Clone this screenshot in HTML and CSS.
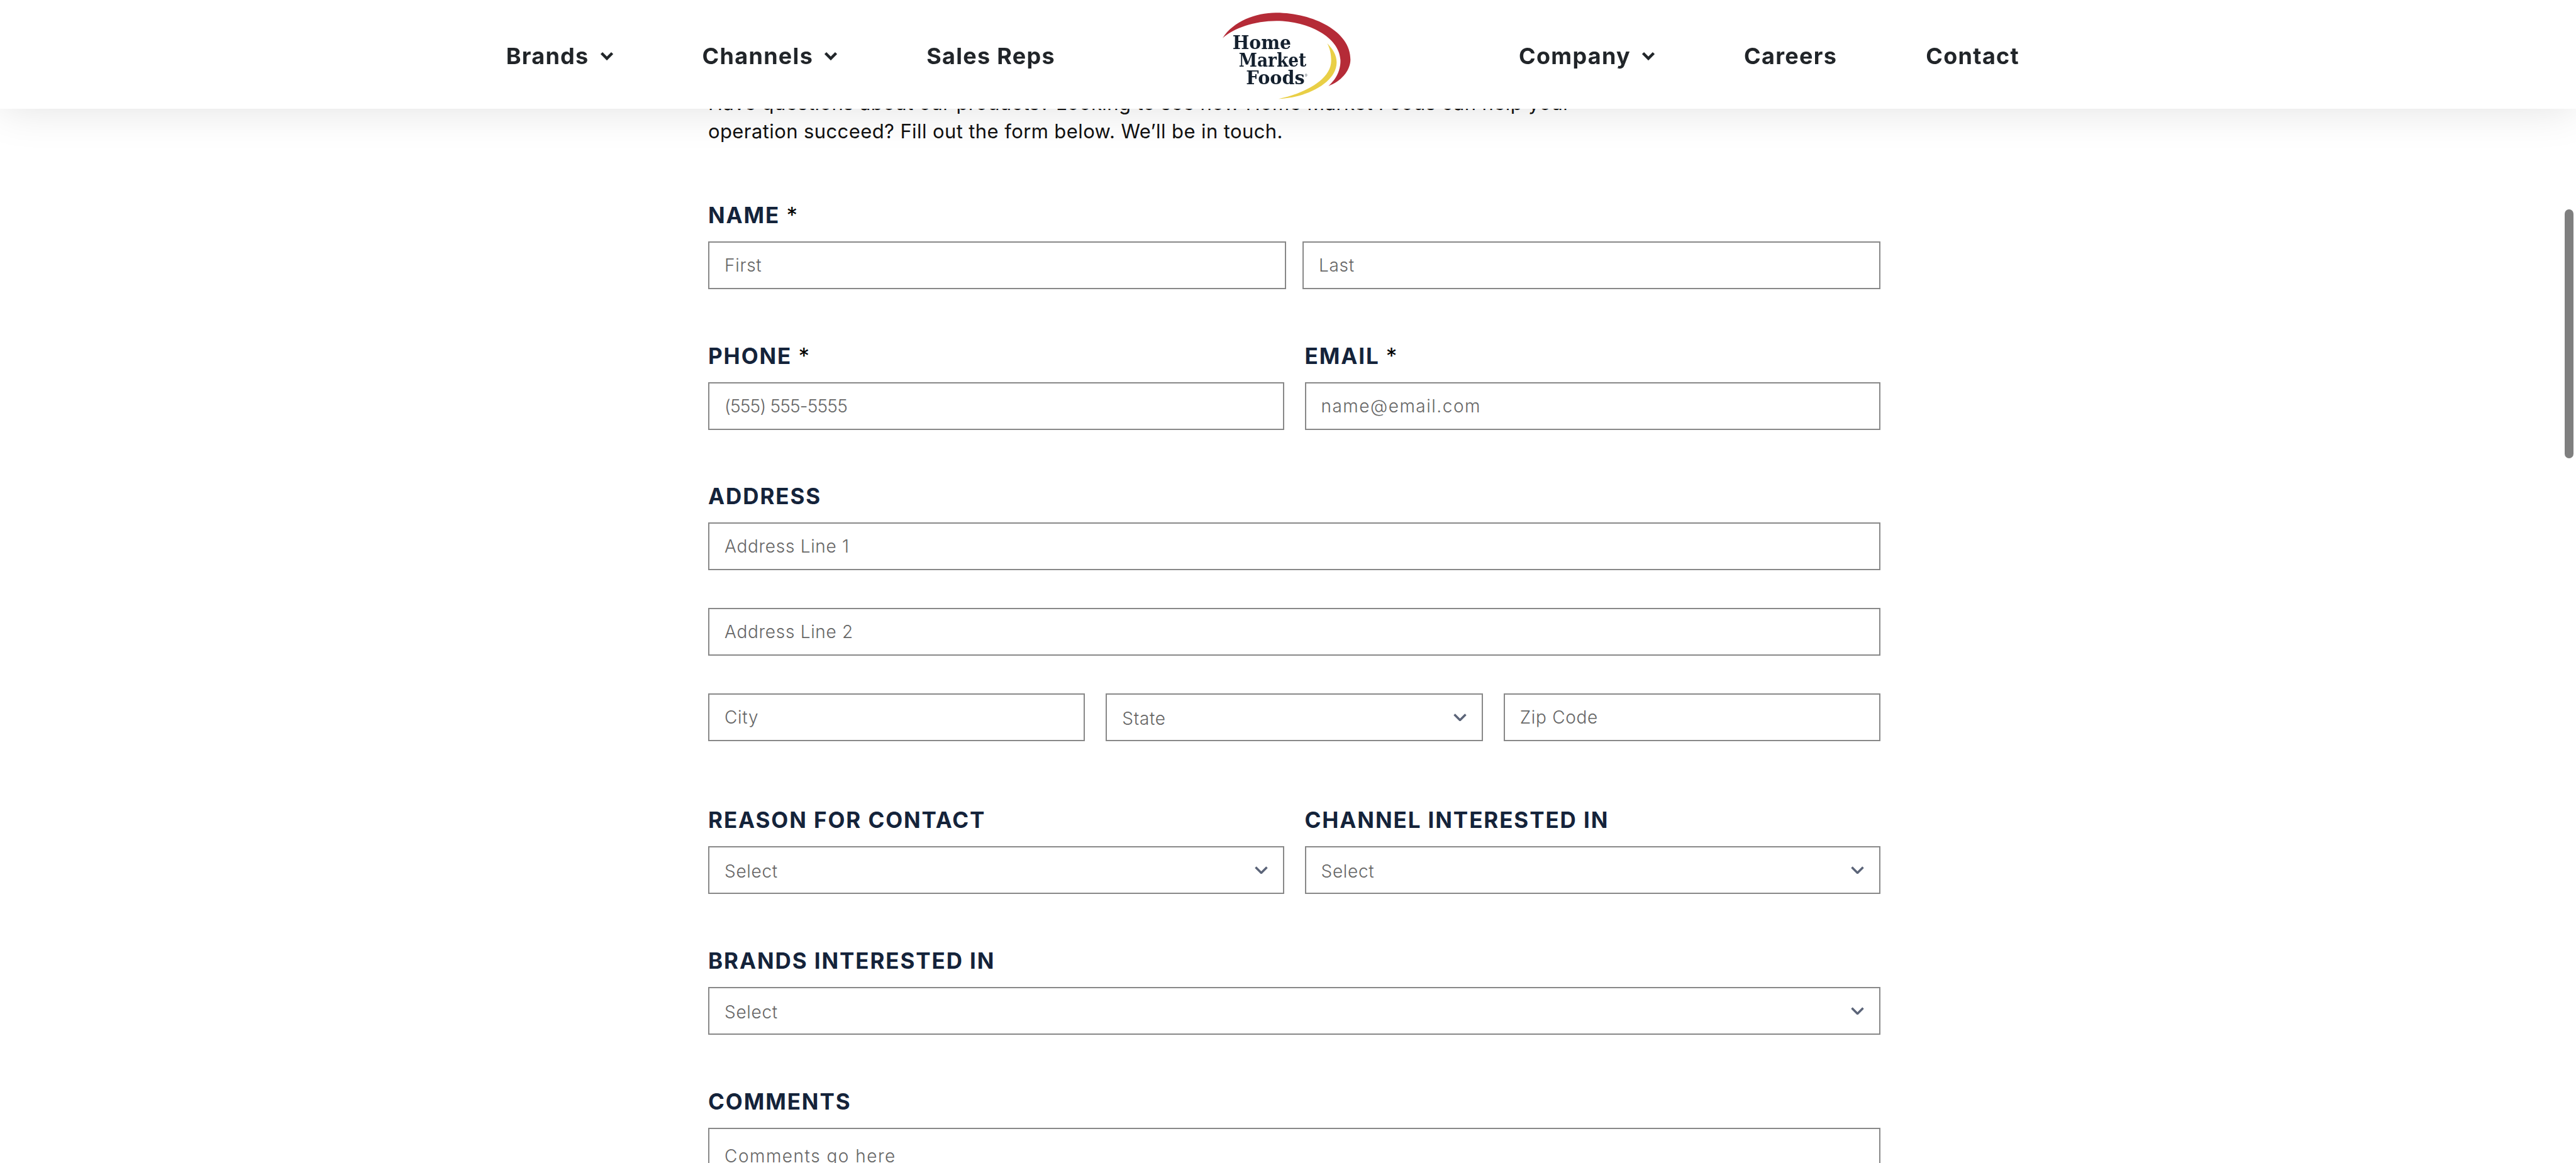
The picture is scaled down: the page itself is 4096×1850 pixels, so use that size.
FILE: index.html
```html
<!DOCTYPE html>
<html lang="en">
<head>
    <meta charset="UTF-8">
    <meta name="viewport" content="width=device-width, initial-scale=1.0">
    <title>Contact - Home Market Foods</title>
    <link rel="stylesheet" href="styles.css">
</head>
<body>
    <header class="site-header">
        <nav class="nav nav-left">
            <a class="nav-link" href="#">Brands
                <svg class="nav-chevron" viewBox="0 0 22 14"><path d="M2.500 2.500 11 11l8.500-8.500"/></svg>
            </a>
            <a class="nav-link" href="#">Channels
                <svg class="nav-chevron" viewBox="0 0 22 14"><path d="M2.500 2.500 11 11l8.500-8.500"/></svg>
            </a>
            <a class="nav-link" href="#">Sales Reps</a>
        </nav>
        <a class="logo" href="#">
            <svg viewBox="0 0 1200 519" width="400" height="173">
                <path class="logo-red" d="M288 182C340 100 450 60 545 61C720 62 900 150 898 285C897 340 850 390 793 410C840 370 852 320 850 285C845 180 700 100 545 100C440 100 340 135 288 182Z"/>
                <path class="logo-yellow" d="M787 207C815 235 833 265 832 300C830 390 700 465 555 472C680 445 805 380 806 290C806 260 800 230 787 207Z"/>
                <text class="logo-text" x="335" y="235" textLength="280" lengthAdjust="spacingAndGlyphs">Home</text>
                <text class="logo-text" x="365" y="319" textLength="323" lengthAdjust="spacingAndGlyphs">Market</text>
                <text class="logo-text" x="400" y="403" textLength="280" lengthAdjust="spacingAndGlyphs">Foods</text>
                <text class="logo-mark" x="680" y="366">®</text>
            </svg>
        </a>
        <nav class="nav nav-right">
            <a class="nav-link" href="#">Company
                <svg class="nav-chevron" viewBox="0 0 22 14"><path d="M2.500 2.500 11 11l8.500-8.500"/></svg>
            </a>
            <a class="nav-link" href="#">Careers</a>
            <a class="nav-link" href="#">Contact</a>
        </nav>
    </header>

    <main class="content">
        <p class="intro">Have questions about our products? Looking to see how Home Market Foods can help your<br>operation succeed? Fill out the form below. We’ll be in touch.</p>

        <form class="contact-form">
            <div class="field">
                <label class="field-label">NAME <span class="req">*</span></label>
                <div class="row row-tight">
                    <input class="control" type="text" placeholder="First">
                    <input class="control" type="text" placeholder="Last">
                </div>
            </div>

            <div class="row">
                <div class="field">
                    <label class="field-label">PHONE <span class="req">*</span></label>
                    <input class="control control-phone" type="text" placeholder="(555) 555-5555">
                </div>
                <div class="field">
                    <label class="field-label">EMAIL <span class="req">*</span></label>
                    <input class="control control-wide" type="text" placeholder="name@email.com">
                </div>
            </div>

            <div class="field field-address">
                <label class="field-label">ADDRESS</label>
                <input class="control stacked" type="text" placeholder="Address Line 1">
                <input class="control stacked" type="text" placeholder="Address Line 2">
                <div class="row">
                    <input class="control" type="text" placeholder="City">
                    <select class="control control-select"><option>State</option></select>
                    <input class="control" type="text" placeholder="Zip Code">
                </div>
            </div>

            <div class="row">
                <div class="field">
                    <label class="field-label">REASON FOR CONTACT</label>
                    <select class="control control-select"><option>Select</option></select>
                </div>
                <div class="field">
                    <label class="field-label">CHANNEL INTERESTED IN</label>
                    <select class="control control-select"><option>Select</option></select>
                </div>
            </div>

            <div class="field">
                <label class="field-label">BRANDS INTERESTED IN</label>
                <select class="control control-select"><option>Select</option></select>
            </div>

            <div class="field">
                <label class="field-label">COMMENTS</label>
                <textarea class="control control-area control-wide" placeholder="Comments go here"></textarea>
            </div>
        </form>
    </main>

    <div class="scroll-thumb"></div>
</body>
</html>
```

FILE: styles.css
```css
html, body {
    height: 100%;
    margin: 0;
    overflow: hidden;
}

body {
    font-family: Inter, "Noto Sans", sans-serif;
    background: #fff;
    color: #111;
}

.site-header {
    position: fixed;
    top: 0;
    left: 0;
    right: 0;
    height: 173px;
    display: grid;
    grid-template-columns: 1fr 400px 1fr;
    background: #fff;
    box-shadow: 0 0 70px rgba(0, 0, 0, 0.12);
    z-index: 10;
}

.nav {
    display: flex;
    align-items: center;
    gap: 141px;
    padding-top: 5px;
}

.nav-left {
    justify-content: flex-end;
    padding-right: 170px;
}

.nav-right {
    padding-left: 167px;
}

.nav-link {
    display: flex;
    align-items: center;
    gap: 17px;
    font-size: 36px;
    font-weight: 700;
    letter-spacing: 1.3px;
    color: #212529;
    text-decoration: none;
    white-space: nowrap;
}

.nav-chevron {
    width: 22px;
    height: 14px;
}

.nav-chevron path {
    fill: none;
    stroke: #212529;
    stroke-width: 4.5;
}

.logo {
    display: block;
    height: 173px;
}

.logo svg {
    display: block;
}

.logo-red {
    fill: #b52b37;
}

.logo-yellow {
    fill: #e9cf46;
}

.logo-text {
    font-family: "DejaVu Serif", serif;
    font-size: 90px;
    font-weight: 700;
    fill: #14202e;
}

.logo-mark {
    font-family: "Liberation Sans", sans-serif;
    font-size: 16px;
    fill: #14202e;
}

.content {
    box-sizing: border-box;
    width: 1864px;
    height: 100vh;
    margin-left: 1126px;
    padding-top: 141px;
    overflow: hidden;
}

.intro {
    margin: 0 0 85px;
    font-size: 31px;
    line-height: 45px;
    letter-spacing: 0.4px;
    white-space: nowrap;
}

.row {
    display: flex;
    gap: 33px;
}

.row > * {
    flex: 1 1 0;
    min-width: 0;
}

.row-tight {
    gap: 26px;
}

.field {
    margin-bottom: 79.7px;
}

.row > .field {
    margin-bottom: 79.7px;
}

.field-address {
    margin-bottom: 99px;
}

.field-label {
    display: block;
    height: 52px;
    line-height: 52px;
    margin-bottom: 16px;
    font-size: 35px;
    font-weight: 700;
    letter-spacing: 1.9px;
    color: #14233a;
    white-space: nowrap;
}

.req {
    font-weight: 400;
    color: #000;
}

.control {
    display: block;
    box-sizing: border-box;
    width: 100%;
    height: 76px;
    padding: 0 24px;
    border: 2px solid #888;
    border-radius: 0;
    background: #fff;
    font-family: Inter, "Noto Sans", sans-serif;
    font-size: 28px;
    font-weight: 300;
    letter-spacing: 0.7px;
    color: #666;
    outline: none;
}

.control::placeholder {
    color: #666;
    opacity: 1;
}

.control-phone {
    letter-spacing: -0.8px;
}

.control-wide {
    letter-spacing: 1.5px;
}

.stacked {
    margin-bottom: 60px;
}

.control-select {
    appearance: none;
    padding-top: 4px;
    background-image: url("data:image/svg+xml,%3csvg xmlns='http://www.w3.org/2000/svg' viewBox='0 0 21 12'%3e%3cpath fill='none' stroke='%235b6478' stroke-width='3.500' d='M1.500 1.500 10.500 10.500 19.500 1.500'/%3e%3c/svg%3e");
    background-repeat: no-repeat;
    background-position: right 24px center;
    background-size: 21px 12px;
}

.control-area {
    height: 300px;
    padding-top: 26px;
    resize: none;
}

.scroll-thumb {
    position: fixed;
    top: 333px;
    right: 4px;
    width: 14px;
    height: 396px;
    border-radius: 7px;
    background: #7f7f7f;
    z-index: 20;
}
```
